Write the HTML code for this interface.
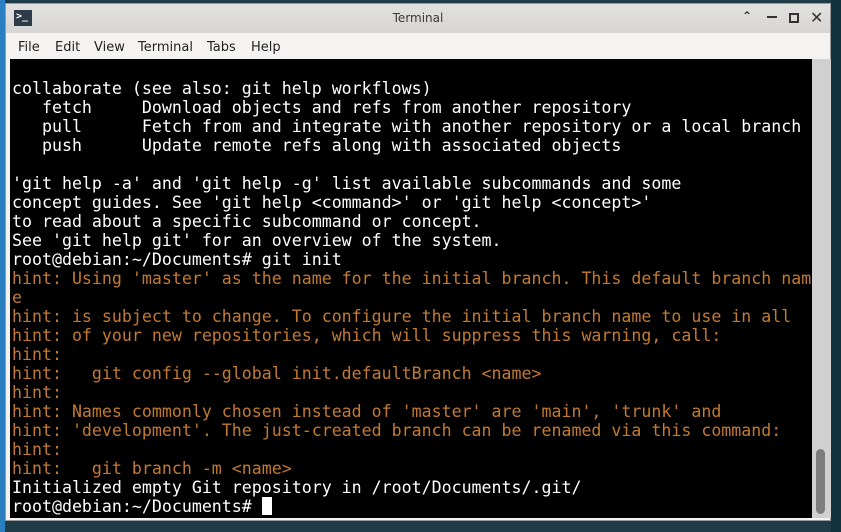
<!DOCTYPE html>
<html><head><meta charset="utf-8"><style>
*{margin:0;padding:0;box-sizing:border-box}
html,body{width:841px;height:532px;overflow:hidden;background:#1d3c47}
.left{position:absolute;left:0;top:0;width:5px;height:532px;background:#2a7fc0}
.right{position:absolute;left:831px;top:0;width:10px;height:532px;background:#12323d}
.win{position:absolute;left:5px;top:3px;width:826px;height:518px;background:#f4f3f1;border:1px solid #9a9a9a}
.title{position:absolute;left:0;top:0;width:100%;height:29px;background:linear-gradient(#e2e1df,#d6d5d3);}
.title .t{position:absolute;left:0;width:100%;text-align:center;top:7px;font:12px "DejaVu Sans","Liberation Sans",sans-serif;color:#3a3a3a}
.icon{position:absolute;left:8px;top:6px;width:18px;height:16px;background:#2e3b48;color:#fff;font:bold 10px "DejaVu Sans Mono",monospace;line-height:14px;padding-left:2px}
.ctl{position:absolute;top:5px;font:bold 14px "DejaVu Sans",sans-serif;color:#333}
.menu{position:absolute;left:0;top:29px;width:100%;height:27px;font:13px "DejaVu Sans","Liberation Sans",sans-serif;color:#222}
.menu span{position:absolute;top:7px}
.term{position:absolute;left:4px;top:55px;width:802px;height:459px;background:#000;overflow:hidden}
.sb{position:absolute;left:806px;top:55px;width:19px;height:459px;background:#d0d0d0}
.thumb{position:absolute;left:4px;top:390px;width:9px;height:65px;background:#7d7d7d;border-radius:5px}
pre{position:absolute;left:2px;top:20px;font:16.6px "DejaVu Sans Mono",monospace;line-height:19px;color:#fff;white-space:pre}
.o{color:#c27a30}
.cur{display:inline-block;width:10px;height:18px;background:#fff;vertical-align:-3px}
</style></head><body>
<div class="left"></div><div class="right"></div>
<div class="win">
<div class="title"><div class="icon">&gt;_</div><div class="t">Terminal</div>
<div class="ctl" style="left:736px;font-size:12px">&#8963;</div>
<div class="ctl" style="left:761px;top:12px;width:10px;height:2px;background:#333"></div>
<div class="ctl" style="left:783px;top:9px;width:10px;height:10px;border:2px solid #333"></div>
<div class="ctl" style="left:804px;top:4px;font-size:16px">&#10005;</div>
</div>
<div class="menu"><span style="left:12px">File</span><span style="left:49px">Edit</span><span style="left:88px">View</span><span style="left:132px">Terminal</span><span style="left:201px">Tabs</span><span style="left:245px">Help</span></div>
<div class="term"><pre>collaborate (see also: git help workflows)
   fetch     Download objects and refs from another repository
   pull      Fetch from and integrate with another repository or a local branch
   push      Update remote refs along with associated objects

'git help -a' and 'git help -g' list available subcommands and some
concept guides. See 'git help &lt;command&gt;' or 'git help &lt;concept&gt;'
to read about a specific subcommand or concept.
See 'git help git' for an overview of the system.
root@debian:~/Documents# git init
<span class="o">hint: Using 'master' as the name for the initial branch. This default branch nam
e
hint: is subject to change. To configure the initial branch name to use in all
hint: of your new repositories, which will suppress this warning, call:
hint:
hint:   git config --global init.defaultBranch &lt;name&gt;
hint:
hint: Names commonly chosen instead of 'master' are 'main', 'trunk' and
hint: 'development'. The just-created branch can be renamed via this command:
hint:
hint:   git branch -m &lt;name&gt;</span>
Initialized empty Git repository in /root/Documents/.git/
root@debian:~/Documents# <span class="cur"></span></pre></div>
<div class="sb"><div class="thumb"></div></div>
</div>
</body></html>
